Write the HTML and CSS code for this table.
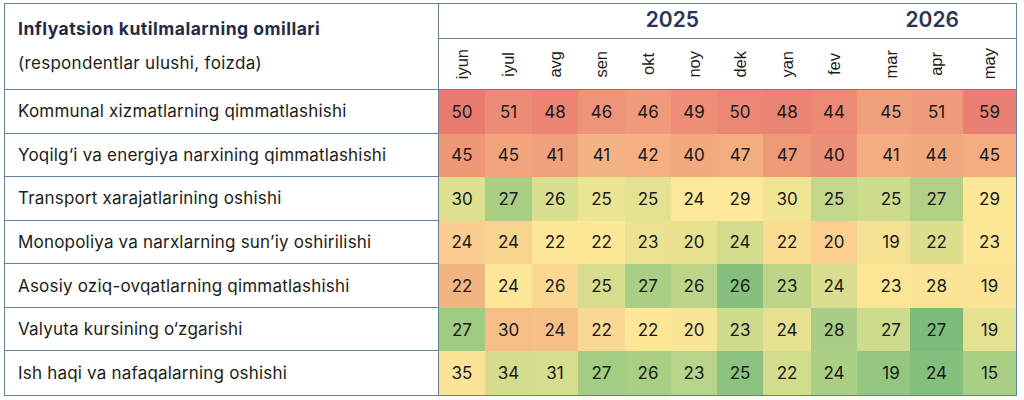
FILE: index.html
```html
<!DOCTYPE html>
<html lang="uz">
<head>
<meta charset="utf-8">
<title>Inflyatsion kutilmalarning omillari</title>
<link rel="stylesheet" href="styles.css">
</head>
<body>
<div class="sheet">
  <div class="title-cell">
    <div class="title">Inflyatsion kutilmalarning omillari</div>
    <div class="subtitle">(respondentlar ulushi, foizda)</div>
  </div>
  <div class="year y2025">2025</div>
  <div class="year y2026">2026</div>

  <div class="month"><span>iyun</span></div>
  <div class="month"><span>iyul</span></div>
  <div class="month"><span>avg</span></div>
  <div class="month"><span>sen</span></div>
  <div class="month"><span>okt</span></div>
  <div class="month"><span>noy</span></div>
  <div class="month"><span>dek</span></div>
  <div class="month"><span>yan</span></div>
  <div class="month"><span>fev</span></div>
  <div class="month shift"><span>mar</span></div>
  <div class="month"><span>apr</span></div>
  <div class="month"><span>may</span></div>

  <div class="label">Kommunal xizmatlarning qimmatlashishi</div>
  <div class="val" style="background:#e87a70">50</div>
  <div class="val" style="background:#ed8c76">51</div>
  <div class="val" style="background:#ec8574">48</div>
  <div class="val" style="background:#ee9478">46</div>
  <div class="val" style="background:#ef9a7a">46</div>
  <div class="val" style="background:#ed8e77">49</div>
  <div class="val" style="background:#eb8774">50</div>
  <div class="val" style="background:#ea8474">48</div>
  <div class="val" style="background:#ec8a75">44</div>
  <div class="val shift" style="background:#f0a07c">45</div>
  <div class="val" style="background:#ef9a7b">51</div>
  <div class="val" style="background:#e97f72">59</div>

  <div class="label">Yoqilg‘i va energiya narxining qimmatlashishi</div>
  <div class="val" style="background:#ef9878">45</div>
  <div class="val" style="background:#f2a57c">45</div>
  <div class="val" style="background:#f0a07b">41</div>
  <div class="val" style="background:#f4b382">41</div>
  <div class="val" style="background:#f4b080">42</div>
  <div class="val" style="background:#f2a97e">40</div>
  <div class="val" style="background:#f3ae80">47</div>
  <div class="val" style="background:#ef9979">47</div>
  <div class="val" style="background:#ec9077">40</div>
  <div class="val shift" style="background:#f3ad80">41</div>
  <div class="val" style="background:#f2a87e">44</div>
  <div class="val" style="background:#f3ad80">45</div>

  <div class="label">Transport xarajatlarining oshishi</div>
  <div class="val" style="background:#dde08f">30</div>
  <div class="val" style="background:#a9cf85">27</div>
  <div class="val" style="background:#d8df8e">26</div>
  <div class="val" style="background:#e9e592">25</div>
  <div class="val" style="background:#e4e290">25</div>
  <div class="val" style="background:#fbe89a">24</div>
  <div class="val" style="background:#fde899">29</div>
  <div class="val" style="background:#f0e594">30</div>
  <div class="val" style="background:#c3d78a">25</div>
  <div class="val shift" style="background:#cddb8c">25</div>
  <div class="val" style="background:#b2d186">27</div>
  <div class="val" style="background:#fce797">29</div>

  <div class="label">Monopoliya va narxlarning sun’iy oshirilishi</div>
  <div class="val" style="background:#f8cd8d">24</div>
  <div class="val" style="background:#f8d48f">24</div>
  <div class="val" style="background:#fde696">22</div>
  <div class="val" style="background:#fde696">22</div>
  <div class="val" style="background:#ece392">23</div>
  <div class="val" style="background:#e7e290">20</div>
  <div class="val" style="background:#d4dc8c">24</div>
  <div class="val" style="background:#f9dd93">22</div>
  <div class="val" style="background:#fbd08e">20</div>
  <div class="val shift" style="background:#f5e194">19</div>
  <div class="val" style="background:#dcde8e">22</div>
  <div class="val" style="background:#fde796">23</div>

  <div class="label">Asosiy oziq-ovqatlarning qimmatlashishi</div>
  <div class="val" style="background:#f2b581">22</div>
  <div class="val" style="background:#fde696">24</div>
  <div class="val" style="background:#fad892">26</div>
  <div class="val" style="background:#d8dd8d">25</div>
  <div class="val" style="background:#a9cf84">27</div>
  <div class="val" style="background:#bcd588">26</div>
  <div class="val" style="background:#86c07e">26</div>
  <div class="val" style="background:#bcd588">23</div>
  <div class="val" style="background:#d9dd8d">24</div>
  <div class="val shift" style="background:#fde596">23</div>
  <div class="val" style="background:#fbe496">28</div>
  <div class="val" style="background:#fde395">19</div>

  <div class="label">Valyuta kursining o‘zgarishi</div>
  <div class="val" style="background:#9fcb82">27</div>
  <div class="val" style="background:#f4be86">30</div>
  <div class="val" style="background:#f5c086">24</div>
  <div class="val" style="background:#fbd892">22</div>
  <div class="val" style="background:#fde796">22</div>
  <div class="val" style="background:#f9e596">20</div>
  <div class="val" style="background:#cfdb8c">23</div>
  <div class="val" style="background:#e6e191">24</div>
  <div class="val" style="background:#a7ce84">28</div>
  <div class="val shift" style="background:#cddb8c">27</div>
  <div class="val" style="background:#7dbb7b">27</div>
  <div class="val" style="background:#e4e190">19</div>

  <div class="label last">Ish haqi va nafaqalarning oshishi</div>
  <div class="val" style="background:#fbe497">35</div>
  <div class="val" style="background:#d5dd8d">34</div>
  <div class="val" style="background:#d6dd8d">31</div>
  <div class="val" style="background:#a3cd83">27</div>
  <div class="val" style="background:#a9cf85">26</div>
  <div class="val" style="background:#b8d488">23</div>
  <div class="val" style="background:#8cc27f">25</div>
  <div class="val" style="background:#d3dc8c">22</div>
  <div class="val" style="background:#abcf85">24</div>
  <div class="val shift" style="background:#94c681">19</div>
  <div class="val" style="background:#84bf7d">24</div>
  <div class="val" style="background:#a9cf85">15</div>
</div>
</body>
</html>
```
FILE: styles.css
```css
* { box-sizing: border-box; }

html, body {
  margin: 0;
  padding: 0;
  background: #ffffff;
}

body {
  font-family: Inter, "Noto Sans", "Liberation Sans", sans-serif;
  color: #1c1c1c;
}

.sheet {
  margin: 3px 0 0 4px;
  width: 1013px;
  height: 393px;
  border: 1px solid #63809f;
  display: grid;
  grid-template-columns: 434px 46px 47px 46px 47px 46px 46px 46px 48px 46px 53px 53px 53px;
  grid-template-rows: 35px 51px repeat(7, 1fr);
}

.title-cell {
  grid-row: 1 / span 2;
  grid-column: 1;
  border-right: 1px solid #63809f;
  border-bottom: 1px solid #63809f;
  padding: 15px 0 0 13px;
}

.title {
  font-size: 17.5px;
  line-height: 20px;
  font-weight: 700;
  letter-spacing: 0.5px;
  color: #1f2b48;
}

.subtitle {
  margin-top: 14px;
  font-size: 17px;
  line-height: 20px;
  letter-spacing: 0.3px;
  color: #1c1c1c;
}

.year {
  border-bottom: 1px solid #63809f;
  display: flex;
  align-items: center;
  justify-content: flex-end;
  font-size: 21px;
  font-weight: 600;
  color: #27365a;
  padding-bottom: 3px;
}

.y2025 {
  grid-column: 2 / span 7;
  padding-right: 64px;
}

.y2026 {
  grid-column: 9 / span 5;
  padding-right: 57px;
}

.month {
  border-bottom: 1px solid #63809f;
  display: flex;
  align-items: center;
  justify-content: center;
  font-family: "Liberation Sans", Arial, sans-serif;
  font-size: 16.5px;
  color: #1c1c1c;
}

.month span {
  writing-mode: vertical-rl;
  transform: rotate(180deg);
  line-height: 1;
}

.label {
  border-right: 1px solid #63809f;
  border-bottom: 1px solid #63809f;
  display: flex;
  align-items: center;
  padding-left: 13px;
  font-size: 17px;
  letter-spacing: 0.2px;
  color: #1c1c1c;
}

.label.last {
  border-bottom: none;
}

.val {
  display: flex;
  align-items: center;
  justify-content: center;
  font-size: 17px;
  color: #1a1a1a;
}

.shift {
  padding-left: 15px;
}
```
